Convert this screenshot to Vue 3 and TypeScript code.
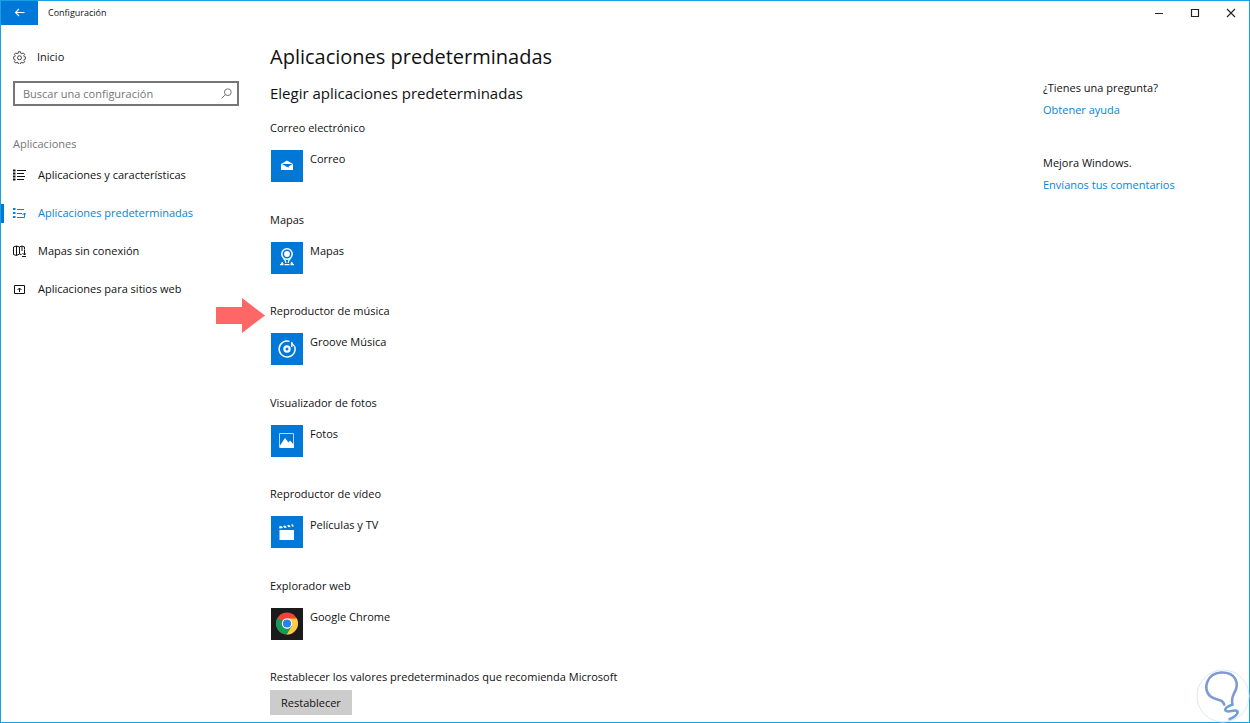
<script setup lang="ts">
import { ref } from 'vue'

interface NavItem {
  id: string
  label: string
}

interface DefaultApp {
  id: string
  category: string
  app: string
  marked?: boolean
}

const navItems: NavItem[] = [
  { id: 'features', label: 'Aplicaciones y características' },
  { id: 'defaults', label: 'Aplicaciones predeterminadas' },
  { id: 'maps', label: 'Mapas sin conexión' },
  { id: 'websites', label: 'Aplicaciones para sitios web' },
]

const defaultApps: DefaultApp[] = [
  { id: 'mail', category: 'Correo electrónico', app: 'Correo' },
  { id: 'maps', category: 'Mapas', app: 'Mapas' },
  { id: 'music', category: 'Reproductor de música', app: 'Groove Música', marked: true },
  { id: 'photos', category: 'Visualizador de fotos', app: 'Fotos' },
  { id: 'video', category: 'Reproductor de vídeo', app: 'Películas y TV' },
  { id: 'web', category: 'Explorador web', app: 'Google Chrome' },
]

const activeId = ref('defaults')
const query = ref('')
</script>

<template>
  <div class="window">
    <header class="titlebar">
      <button class="back" type="button" aria-label="Atrás">
        <svg width="12" height="10" viewBox="0 0 12 10" fill="none" stroke="#fff" stroke-width="1.1">
          <path d="M10.500 4.500H1.500M5 1 1.500 4.500 5 8" />
        </svg>
      </button>
      <span class="caption">Configuración</span>
      <div class="controls">
        <button type="button" aria-label="Minimizar">
          <svg width="10" height="10" viewBox="0 0 10 10"><path d="M1 5.5h8" stroke="#222" fill="none" /></svg>
        </button>
        <button type="button" aria-label="Maximizar">
          <svg width="10" height="10" viewBox="0 0 10 10"><path d="M1.5 1.5h7v7h-7z" stroke="#222" stroke-width="1.2" fill="none" /></svg>
        </button>
        <button type="button" aria-label="Cerrar">
          <svg width="10" height="10" viewBox="0 0 10 10"><path d="m1 1 8 8M9 1 1 9" stroke="#222" stroke-width="1.1" fill="none" /></svg>
        </button>
      </div>
    </header>

    <div class="body">
      <aside class="sidebar">
        <a class="home" href="#inicio">
          <svg width="13" height="13" viewBox="0 0 26 26" fill="none" stroke="#333" stroke-width="1.8">
            <path d="M11 1.500h4l.7 3.200 2 .8 2.800-1.700 2.800 2.800-1.700 2.800.8 2 3.100.7v3.800l-3.100.7-.8 2 1.700 2.800-2.800 2.800-2.800-1.700-2 .8-.7 3.200h-4l-.7-3.200-2-.8-2.800 1.700-2.800-2.800 1.700-2.800-.8-2-3.100-.7v-3.800l3.100-.7.8-2-1.700-2.800 2.800-2.800 2.800 1.700 2-.8z" />
            <circle cx="13" cy="13.500" r="4" />
          </svg>
          <span>Inicio</span>
        </a>

        <form class="search" role="search" @submit.prevent>
          <input v-model="query" type="text" placeholder="Buscar una configuración" aria-label="Buscar una configuración" />
          <button type="submit" aria-label="Buscar">
            <svg width="11" height="11" viewBox="0 0 11 11" fill="none" stroke="#777">
              <circle cx="6.8" cy="4.2" r="3.4" />
              <path d="M4.3 6.7.6 10.4" />
            </svg>
          </button>
        </form>

        <h2 class="section">Aplicaciones</h2>
        <nav aria-label="Aplicaciones">
          <a
            v-for="item in navItems"
            :key="item.id"
            :href="'#' + item.id"
            :class="['nav-item', { active: item.id === activeId }]"
            :aria-current="item.id === activeId ? 'page' : undefined"
            @click="activeId = item.id"
          >
            <svg width="13" height="13" viewBox="0 0 13 13" fill="none" stroke="currentColor" aria-hidden="true">
              <template v-if="item.id === 'features'">
                <path d="M0 1.500h2.500M0 4.500h2.500M0 7.500h2.500M0 10.500h2.500" stroke-width="2" />
                <path d="M4 1.500h9M4 4.500h7M4 7.500h8M4 10.500h7" />
              </template>
              <template v-else-if="item.id === 'defaults'">
                <path d="M0 2h2.500M0 6h2.500M0 10h2.500" stroke-width="2" />
                <path d="M4 2.500h7M4 6.500h5M4 10.500h7.500V6M9.500 8l2-2 2 2" />
              </template>
              <template v-else-if="item.id === 'maps'">
                <path d="M8.500 9.500 6.500 9 3.500 10.500.5 9.500V2l3-1 3 1 2.500-1 2.500 1v2.500M3.500 1v9.500M6.500 2v7M9 1v5" />
                <path d="M11.500 5v5M9.500 8l2 2 2-2M9 11.500h4" />
              </template>
              <template v-else>
                <path d="M1.500 2.500h10v8h-10zM6.500 9V5M4.500 7l2-2 2 2" />
              </template>
            </svg>
            <span>{{ item.label }}</span>
          </a>
        </nav>
      </aside>

      <main class="content">
        <h1>Aplicaciones predeterminadas</h1>
        <h2>Elegir aplicaciones predeterminadas</h2>

        <div class="groups">
          <section v-for="entry in defaultApps" :key="entry.id" class="group">
            <svg v-if="entry.marked" class="marker" width="49" height="35" viewBox="0 0 49 35" aria-hidden="true">
              <path d="M0 9h26V0l23 17.500L26 35v-9H0z" fill="#ff6666" />
            </svg>
            <h3>{{ entry.category }}</h3>
            <button class="app" type="button">
              <svg class="tile" width="32" height="32" viewBox="0 0 32 32" aria-hidden="true">
                <rect width="32" height="32" :fill="entry.id === 'web' ? '#1b1b1b' : '#0078d7'" />
                <g v-if="entry.id === 'mail'" fill="#fff">
                  <path d="m10 14 6-3.500 6 3.500v6H10z" />
                  <path d="M11 14h10.500l-4 2.500 1 1-2.500-.4z" fill="#0078d7" />
                </g>
                <g v-else-if="entry.id === 'maps'" fill="none" stroke="#fff">
                  <circle cx="16" cy="12" r="5.200" stroke-width="1.500" />
                  <circle cx="16" cy="12" r="2.900" fill="#fff" stroke="none" />
                  <path d="M12.500 16.500q2.300 1.500 2.300 4.500M19.500 16.500q-2.300 1.500-2.300 4.500" stroke-width="1.300" />
                  <path d="m11.500 20-1 2h2M20.500 20l1 2h-2M9 22.700h3.500M19.500 22.700H23M13.500 22.700h5" stroke-width="1.300" />
                </g>
                <g v-else-if="entry.id === 'music'" fill="none" stroke="#fff">
                  <path d="M18.500 8.400A8 8 0 1 0 23.700 13.500" stroke-width="1.400" />
                  <circle cx="16" cy="16" r="2.600" stroke-width="2.200" />
                  <path d="M20.800 14V9q.3 2.500 2.900 4.500" stroke-width="1.300" />
                </g>
                <g v-else-if="entry.id === 'photos'">
                  <path d="M8.500 8.500h14v14h-14z" fill="none" stroke="#b7daf5" />
                  <path d="M9 20.500 14 13l3.500 4.500 1.500-2 4 4.500v3H9z" fill="#fff" />
                </g>
                <g v-else-if="entry.id === 'video'" fill="#fff">
                  <path d="M8.500 14h14.500v10H8.500z" />
                  <path d="m8 10.500 2.500-.5 1.500 2-3.500.5zM12 9.900l2.300-.4 1.500 2-2.300.4zM16 9.300l2.300-.4 1.500 2-2.300.4zM20 8.700l2-.4.700 2.200-1.200.3z" />
                </g>
                <g v-else>
                  <circle cx="16" cy="15.500" r="11" fill="#f44336" />
                  <path d="M16 15.500 6.500 10A11 11 0 0 0 16 26.500l5-9z" fill="#0f9d58" />
                  <path d="M16 10.500h9.800A11 11 0 0 1 15.800 26.500l5-8.500z" fill="#ffcd40" />
                  <circle cx="16" cy="15.500" r="5.200" fill="#fff" />
                  <circle cx="16" cy="15.500" r="4.100" fill="#2583ea" />
                </g>
              </svg>
              <span>{{ entry.app }}</span>
            </button>
          </section>
        </div>

        <p id="reset-text">Restablecer los valores predeterminados que recomienda Microsoft</p>
        <button class="reset" type="button" aria-describedby="reset-text">Restablecer</button>
      </main>

      <aside class="help">
        <div class="help-block">
          <p>¿Tienes una pregunta?</p>
          <a href="#ayuda">Obtener ayuda</a>
        </div>
        <div class="help-block">
          <p>Mejora Windows.</p>
          <a href="#comentarios">Envíanos tus comentarios</a>
        </div>
      </aside>
    </div>

    <svg class="bulb" width="54" height="54" viewBox="0 0 54 54" fill="none" aria-hidden="true">
      <circle cx="27" cy="27" r="26" fill="#fff" stroke="#dfe7f5" />
      <path id="bulb-line" d="M28.500 36.500C27 29 20 32 14 27 7 20 10 4.500 25 3.500c15-.5 19 11 13 21-2 4-2.500 7-1.500 11-3 1-8 3-7 6 2 3 10-2 12 1 1 3-5 7-9 8" stroke="#6fa0d8" stroke-width="2.600" />
      <path d="M28.500 36.500C27 29 20 32 14 27 7 20 10 4.500 25 3.500c15-.5 19 11 13 21-2 4-2.500 7-1.500 11" stroke="#9a8fce" stroke-width="1" />
    </svg>
  </div>
</template>

<style>
body {
  margin: 0;
  background: #fff;
}
</style>

<style scoped>
.window {
  position: relative;
  box-sizing: border-box;
  min-height: 100vh;
  display: flex;
  flex-direction: column;
  border: 1px solid #18a0e0;
  background: #fff;
  color: #111;
  font-family: "Open Sans", "Noto Sans", sans-serif;
  font-size: 11px;
  line-height: 16px;
}

h1,
h2,
h3,
p {
  margin: 0;
  font-size: 11px;
  font-weight: 400;
}

a {
  color: inherit;
  text-decoration: none;
}

button {
  border: 0;
  padding: 0;
  background: none;
  color: inherit;
  font: inherit;
}

svg {
  display: block;
  flex: none;
}

.titlebar {
  display: flex;
  align-items: center;
  height: 24px;
}

.back {
  display: flex;
  align-items: center;
  justify-content: center;
  width: 37px;
  height: 24px;
  background: #0078d7;
}

.caption {
  margin-left: 10px;
  font-size: 9px;
}

.controls {
  display: flex;
  margin-left: auto;
}

.controls button {
  display: flex;
  align-items: center;
  justify-content: center;
  width: 36px;
  height: 24px;
}

.body {
  flex: 1;
  display: flex;
}

.sidebar {
  box-sizing: border-box;
  width: 269px;
  flex: none;
  padding-top: 24px;
}

.home {
  display: flex;
  align-items: center;
  gap: 11px;
  padding-left: 12px;
}

.search {
  box-sizing: border-box;
  display: flex;
  align-items: center;
  height: 25px;
  margin: 16px 31px 0 12px;
  border: 2px solid #767676;
}

.search input {
  flex: 1;
  min-width: 0;
  border: 0;
  outline: 0;
  padding: 0 0 0 8px;
  background: none;
  color: inherit;
  font: inherit;
}

.search input::placeholder {
  color: #767676;
  opacity: 1;
}

.search button {
  padding: 0 5px;
}

.section {
  margin: 30px 0 4px 12px;
  color: #767676;
}

.nav-item {
  display: flex;
  align-items: center;
  gap: 12px;
  height: 38px;
  padding-left: 12px;
  position: relative;
}

.nav-item.active {
  color: #0086dc;
}

.nav-item.active::before {
  content: "";
  position: absolute;
  left: 0;
  top: 10px;
  width: 3px;
  height: 19px;
  background: #0078d7;
}

.content {
  flex: 1;
  display: flex;
  flex-direction: column;
  align-items: flex-start;
  padding: 17px 0 7px;
}

h1 {
  font-size: 20px;
  line-height: 30px;
}

.content h2 {
  margin: 11px 0 17px;
  font-size: 15px;
  line-height: 20px;
}

.groups {
  flex: 1;
  display: grid;
  grid-auto-rows: 1fr;
}

.group {
  position: relative;
  min-height: 62px;
}

.marker {
  position: absolute;
  right: 100%;
  top: -5px;
  margin-right: 5px;
}

.app {
  display: flex;
  align-items: flex-start;
  gap: 7px;
  margin: 14px 0 0 1px;
  line-height: 18px;
}

.reset {
  margin-top: 5px;
  padding: 0 11px;
  height: 25px;
  background: #ccc;
}

.help {
  display: flex;
  flex-direction: column;
  gap: 31px;
  width: 206px;
  flex: none;
  padding-top: 52px;
}

.help-block {
  line-height: 22px;
}

.help-block a {
  color: #0086dc;
}

.bulb {
  position: absolute;
  right: -1px;
  bottom: -1px;
}
</style>
